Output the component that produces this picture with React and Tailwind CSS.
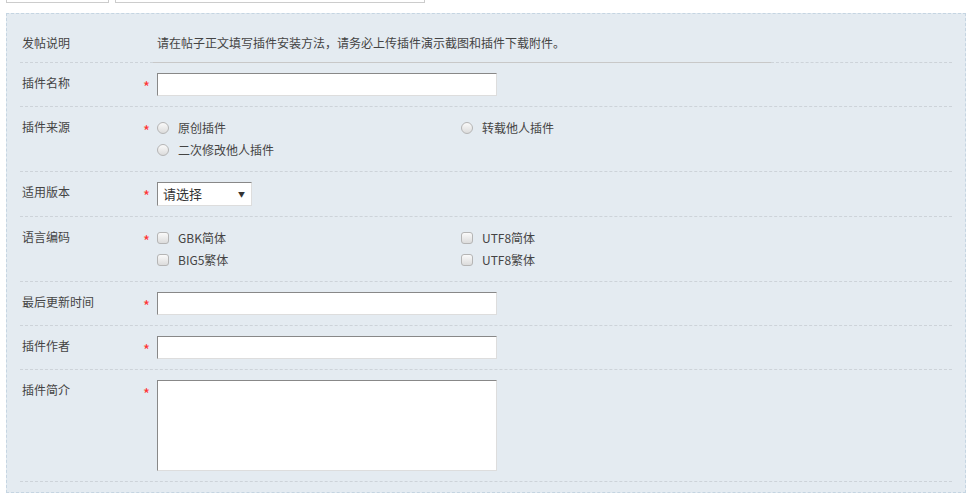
import React from 'react';

const font = { fontFamily: '"Noto Sans CJK SC", "Microsoft YaHei", sans-serif' };

const Star = () => (
  <div className="w-[14px] h-[20px] shrink-0 translate-y-[4px] text-[15px] leading-[20px] text-[#f33]">*</div>
);

const TextInput = () => (
  <div className="w-[340px] h-[23px] bg-white border border-t-[#888] border-l-[#888] border-r-[#ddd] border-b-[#ddd]" />
);

const Radio = ({ label }) => (
  <div className="flex items-center h-[22px] w-[304px]">
    <span className="w-[12px] h-[12px] rounded-full border border-[#b5b5b5] bg-gradient-to-b from-[#fafafa] to-[#dcdcdc]" />
    <span className="ml-[9px]">{label}</span>
  </div>
);

const Check = ({ label }) => (
  <div className="flex items-center h-[22px] w-[304px]">
    <span className="w-[12px] h-[12px] rounded-[3px] border border-[#b5b5b5] bg-gradient-to-b from-[#fafafa] to-[#dcdcdc]" />
    <span className="ml-[9px]">{label}</span>
  </div>
);

const Row = ({ label, children }) => (
  <div className="flex py-[10px] border-b border-dashed border-[#cdd3d9]">
    <div className="w-[123px] shrink-0 pl-[2px] leading-[20px] text-[#444]">{label}</div>
    <Star />
    <div className="flex-1">{children}</div>
  </div>
);

export default function App() {
  return (
    <div className="bg-white min-h-[502px] text-[12px]" style={font}>
      {/* partly scrolled away inputs */}
      <div className="flex -mt-[21px] ml-[6px] gap-[6px]">
        <div className="w-[103px] h-[24px] border border-[#ccc] bg-white" />
        <div className="w-[310px] h-[24px] border border-[#ccc] bg-white" />
      </div>

      {/* Form panel */}
      <div className="ml-[6px] mt-[10px] w-[960px] bg-[#e4ebf1] border border-dashed border-[#c5d5e2] px-[13px] pt-[10px] pb-[10px]">
        {/* 发帖说明 */}
        <div className="flex">
          <div className="w-[133px] shrink-0 py-[10px] pl-[2px] leading-[18px] text-[#444] border-b border-dashed border-[#cdd3d9]">发帖说明</div>
          <div className="w-[618px] shrink-0 py-[10px] pl-[4px] leading-[18px] text-[#444] border-b border-[#c8c8c8]">
            请在帖子正文填写插件安装方法，请务必上传插件演示截图和插件下载附件。
          </div>
          <div className="flex-1 border-b border-dashed border-[#cdd3d9]" />
        </div>

        <Row label="插件名称"><TextInput /></Row>

        <Row label="插件来源">
          <div className="flex flex-wrap text-[#444]">
            <Radio label="原创插件" />
            <Radio label="转载他人插件" />
            <Radio label="二次修改他人插件" />
          </div>
        </Row>

        <Row label="适用版本">
          <div className="w-[95px] h-[24px] bg-white border border-t-[#888] border-l-[#888] border-r-[#ddd] border-b-[#ddd] flex items-center justify-between pl-[5px] pr-[6px] text-[#333]">
            <span className="text-[13px]">请选择</span>
            <span className="text-[7px]">▼</span>
          </div>
        </Row>

        <Row label="语言编码">
          <div className="flex flex-wrap text-[#444]">
            <Check label="GBK简体" />
            <Check label="UTF8简体" />
            <Check label="BIG5繁体" />
            <Check label="UTF8繁体" />
          </div>
        </Row>

        <Row label="最后更新时间"><TextInput /></Row>
        <Row label="插件作者"><TextInput /></Row>

        <Row label="插件简介">
          <div className="w-[340px] h-[91px] bg-white border border-t-[#888] border-l-[#888] border-r-[#ddd] border-b-[#ddd]" />
        </Row>
      </div>
    </div>
  );
}
